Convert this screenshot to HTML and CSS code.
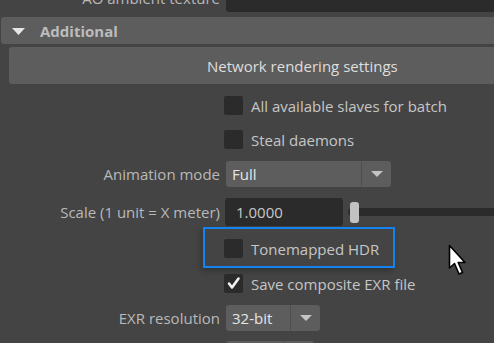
FILE: index.html
```html
<!DOCTYPE html>
<html>
<head>
<meta charset="utf-8">
<link rel="stylesheet" href="styles.css">
</head>
<body>
<div class="panel">
  <div class="row top-row">
    <div class="label top-label">AO ambient texture</div>
    <div class="dark-field"></div>
  </div>

  <div class="section-header">
    <svg class="tri" width="13" height="7" viewBox="0 0 13 7"><polygon points="0,0 13,0 6.5,7" fill="#e6e6e6"/></svg>
    <span class="section-title">Additional</span>
  </div>

  <div class="wide-button"><span>Network rendering settings</span></div>

  <div class="check-row r-slaves">
    <span class="checkbox"></span>
    <span class="check-label">All available slaves for batch</span>
  </div>

  <div class="check-row r-steal">
    <span class="checkbox"></span>
    <span class="check-label">Steal daemons</span>
  </div>

  <div class="row r-anim">
    <div class="label">Animation mode</div>
    <div class="dropdown dd-anim">
      <span class="dd-value">Full</span>
      <span class="dd-arrow"><svg width="12" height="6" viewBox="0 0 12 6"><polygon points="0,0 12,0 6,6" fill="#c4c4c4"/></svg></span>
    </div>
  </div>

  <div class="row r-scale">
    <div class="label">Scale (1 unit = X meter)</div>
    <div class="num-input">1.0000</div>
    <div class="slider">
      <div class="track"></div>
      <div class="handle"></div>
    </div>
  </div>

  <div class="focus-wrap">
    <div class="focus-box">
      <span class="checkbox"></span>
      <span class="check-label">Tonemapped HDR</span>
    </div>
  </div>

  <div class="check-row r-save">
    <span class="checkbox checked">
      <svg width="19" height="19" viewBox="0 0 19 19"><path d="M5 9.5 L8 13.5 L14.5 4.5" fill="none" stroke="#f2f2f2" stroke-width="2.6" stroke-linecap="round" stroke-linejoin="round"/></svg>
    </span>
    <span class="check-label">Save composite EXR file</span>
  </div>

  <div class="row r-exr">
    <div class="label">EXR resolution</div>
    <div class="dropdown dd-exr">
      <span class="dd-value">32-bit</span>
      <span class="dd-arrow"><svg width="12" height="6" viewBox="0 0 12 6"><polygon points="0,0 12,0 6,6" fill="#c4c4c4"/></svg></span>
    </div>
  </div>

  <div class="row r-next">
    <div class="label"></div>
    <div class="dropdown dd-next">
      <span class="dd-value"></span>
      <span class="dd-arrow"></span>
    </div>
  </div>
</div>

<svg class="cursor" width="20" height="34" viewBox="0 0 20 34">
  <path d="M1.5 1.5 L1.5 24 L6.5 19.5 L11 30 L14.5 28.5 L10.2 18.5 L17 18.5 Z" fill="#ffffff" stroke="#000000" stroke-width="1.6" stroke-linejoin="round"/>
</svg>
</body>
</html>
```

FILE: styles.css
```css
html, body {
  margin: 0;
  padding: 0;
  background: #444444;
  width: 494px;
  height: 343px;
  overflow: hidden;
  font-family: "Open Sans", "Noto Sans", sans-serif;
  font-size: 15px;
  color: #c2c2c2;
}

.panel {
  display: flex;
  flex-direction: column;
  height: 343px;
  overflow: hidden;
}

.row {
  display: flex;
  align-items: center;
  flex: none;
}

.label {
  width: 220px;
  flex: none;
  text-align: right;
  color: #b9b9b9;
  white-space: nowrap;
  margin-right: 6px;
}

.top-row {
  height: 12px;
  align-items: flex-start;
  overflow: hidden;
}

.top-label {
  line-height: 14px;
  margin-top: -9px;
}

.dark-field {
  flex: 1;
  height: 12px;
  background: #2b2b2b;
  border-bottom-left-radius: 3px;
}

.section-header {
  flex: none;
  margin-top: 5px;
  margin-left: 1px;
  height: 27px;
  background: #5d5d5d;
  border-radius: 3px 0 0 3px;
  display: flex;
  align-items: center;
}

.tri {
  margin-left: 11px;
  margin-right: 15px;
  margin-top: 1px;
}

.section-title {
  font-weight: 700;
  color: #bcbcbc;
  font-size: 15px;
}

.wide-button {
  flex: none;
  margin-top: 3px;
  margin-left: 9px;
  height: 37px;
  background: #5d5d5d;
  border-radius: 3px 0 0 3px;
  display: flex;
  align-items: center;
  padding-left: 198px;
  color: #dedede;
}

.check-row {
  flex: none;
  display: flex;
  align-items: center;
  padding-left: 224px;
  height: 19px;
}

.checkbox {
  width: 19px;
  height: 19px;
  flex: none;
  background: #2b2b2b;
  border-radius: 2px;
  margin-right: 8px;
  display: block;
}

.checkbox svg {
  display: block;
}

.check-label {
  color: #c6c6c6;
  white-space: nowrap;
}

.r-slaves { margin-top: 12px; }
.r-steal { margin-top: 15px; }

.r-anim {
  margin-top: 12px;
  height: 26px;
}

.dropdown {
  display: flex;
  height: 26px;
  background: #5d5d5d;
  border-radius: 3px;
}

.dd-value {
  flex: 1;
  padding-left: 6px;
  display: flex;
  align-items: center;
  color: #e6e6e6;
  font-size: 15px;
}

.dd-arrow {
  width: 29px;
  border-left: 1px solid #4e4e4e;
  display: flex;
  align-items: center;
  justify-content: center;
}

.dd-anim { width: 165px; }
.dd-exr { width: 94px; }
.dd-next { width: 88px; }

.r-scale {
  margin-top: 11px;
  height: 28px;
}

.r-scale .label { margin-right: 5px; }

.num-input {
  width: 107px;
  height: 28px;
  background: #2b2b2b;
  border-radius: 3px;
  padding-left: 11px;
  display: flex;
  align-items: center;
  color: #c8c8c8;
  font-size: 15px;
}

.slider {
  flex: 1;
  position: relative;
  height: 28px;
  margin-left: 5px;
  display: flex;
  align-items: center;
}

.track {
  flex: 1;
  height: 8px;
  background: #2b2b2b;
  border-radius: 4px 0 0 4px;
}

.handle {
  position: absolute;
  left: 2px;
  top: 4px;
  width: 9px;
  height: 21px;
  background: #c2c2c2;
  border-radius: 3px;
}

.focus-wrap {
  flex: none;
  margin-top: 1px;
  padding-left: 203px;
}

.focus-box {
  width: 169px;
  height: 37px;
  border: 2px solid #1582ef;
  display: flex;
  align-items: center;
  padding-left: 19px;
  box-sizing: content-box;
  box-shadow: -2px 3px 6px rgba(0, 0, 0, 0.25);
}

.focus-box .checkbox { margin-top: 2px; }
.focus-box .check-label { margin-top: 2px; }

.r-save { margin-top: 6px; }

.r-exr {
  margin-top: 12px;
  height: 26px;
}

.r-next {
  margin-top: 10px;
  height: 26px;
}

.cursor {
  position: absolute;
  left: 448px;
  top: 244px;
}
```
